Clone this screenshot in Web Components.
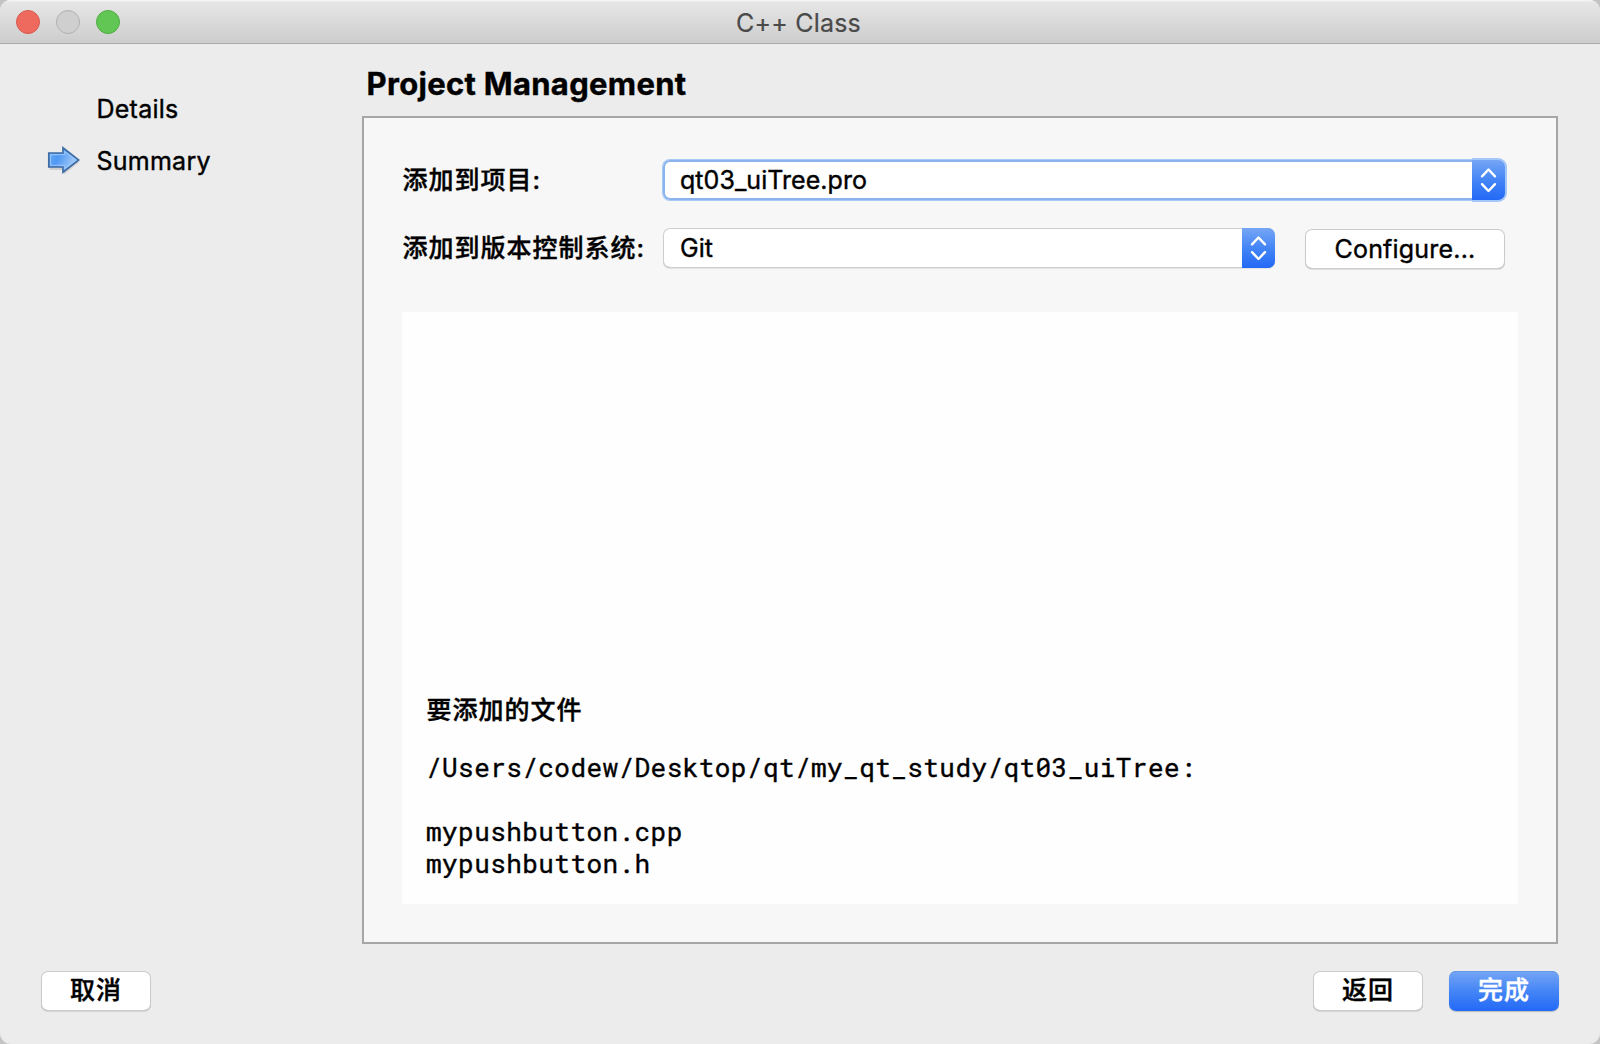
<!DOCTYPE html>
<html lang="zh-CN">
<head>
<meta charset="utf-8">
<title>C++ Class</title>
<style>
html, body { margin: 0; height: 100%; overflow: hidden; }
body {
  background: #c4c4c4;
  color: #000;
  font: 400 25px/32px Inter, "Noto Sans CJK SC", sans-serif;
  letter-spacing: .2px;
  font-feature-settings: "calt" 0;
  -webkit-text-stroke: .4px;
}
.zh { font-weight: 500; letter-spacing: 1px; }
</style>
</head>
<body>
<wizard-window caption="C++ Class">
  <wizard-step slot="steps">Details</wizard-step>
  <wizard-step slot="steps" current>Summary</wizard-step>
  <wizard-page heading="Project Management">
    <form-row label="添加到项目:">
      <combo-box focused>qt03_uiTree.pro</combo-box>
    </form-row>
    <form-row label="添加到版本控制系统:">
      <combo-box>Git</combo-box>
      <push-button style="--w:200px;--lh:41px;margin:1px 0 0 30px">Configure...</push-button>
    </form-row>
    <file-summary heading="要添加的文件">/Users/codew/Desktop/qt/my_qt_study/qt03_uiTree:

mypushbutton.cpp
mypushbutton.h</file-summary>
  </wizard-page>
  <push-button slot="left" class="zh">取消</push-button>
  <push-button slot="right" class="zh">返回</push-button>
  <push-button slot="right" class="zh" primary>完成</push-button>
</wizard-window>

<script>
const define = (name, render) => customElements.define(name, class extends HTMLElement {
  connectedCallback() {
    if (this.shadowRoot) return;
    this.attachShadow({ mode: 'open' }).innerHTML = render(this);
  }
});

define('traffic-lights', () => `
<style>
:host { display: flex; gap: 16px; }
i { width: 24px; height: 24px; border-radius: 50%; box-sizing: border-box; border: 1px solid; }
.close { background: #ee6a5f; border-color: #d9594f; }
.min { background: #cfcfcf; border-color: #b1b1b1; }
.zoom { background: #62c655; border-color: #50ad43; }
</style>
<i class="close"></i><i class="min"></i><i class="zoom"></i>`);

define('wizard-window', el => `
<style>
:host { display: flex; flex-direction: column; height: 1044px; background: #ececec;
  border-radius: 11px; overflow: hidden; }
header { flex: none; box-sizing: border-box; height: 44px; padding: 0 16px; display: grid;
  grid-template-columns: 1fr auto 1fr; align-items: center; border-bottom: 1px solid #a9a9a9;
  background: linear-gradient(#f4f4f4 0, #f4f4f4 1px, #e6e6e6 2px, #cdcdcd 43px); color: #4a4a4a;
  -webkit-text-stroke: .2px; }
header span { padding-top: 2px; margin-right: 3px; }
main { flex: none; display: flex; height: 900px; }
nav { width: 362px; display: flex; flex-direction: column; gap: 20px; padding-top: 49px; box-sizing: border-box; }
footer { display: flex; gap: 26px; padding: 27px 41px 0; }
.grow { flex: 1; }
</style>
<header><traffic-lights></traffic-lights><span>${el.getAttribute('caption')}</span></header>
<main><nav><slot name="steps"></slot></nav><slot></slot></main>
<footer><slot name="left"></slot><div class="grow"></div><slot name="right"></slot></footer>`);

define('wizard-step', el => `
<style>
:host { display: flex; height: 32px; line-height: 32px; align-items: center; letter-spacing: .25px; }
.mark { width: 50.5px; height: 32px; padding-left: 46px; }
svg { display: block; }
</style>
<div class="mark">${el.hasAttribute('current') ? `
<svg width="38" height="32" viewBox="0 0 38 32">
  <defs>
    <linearGradient id="a" x1="0" y1="0" x2="1" y2=".35"><stop offset="0" stop-color="#6aaaf5"/><stop offset=".4" stop-color="#4f98f3"/><stop offset="1" stop-color="#a9cdf8"/></linearGradient>
  </defs>
  <path d="M3.5 10H18V5.5L33.5 17 18 29.6V25H3.5Z" fill="#000" opacity=".12"/>
  <path d="M2.8 8H17V2.8L32.6 15 17 27.2V22H2.8Z" fill="url(#a)" stroke="#3e6ca6" stroke-width="1.7"/>
  <path d="M4.6 9.6H18.5V6.6L29.8 15 18.5 23.4V20.4H4.6Z" fill="none" stroke="#9cc8fb" stroke-width="1.3" opacity=".8"/>
</svg>` : ''}</div><slot></slot>`);

define('wizard-page', el => `
<style>
:host { display: block; width: 1196px; }
h1 { margin: 0; padding: 20px 0 0 4.6px; height: 52px; font-size: 31px; line-height: 40px; font-weight: 700; letter-spacing: .3px; }
section { box-sizing: border-box; height: 828px; border: 2px solid #a6a6a6; background: #f7f7f7;
  padding: 42px 38px 38px; display: flex; flex-direction: column; }
</style>
<h1>${el.getAttribute('heading')}</h1><section><slot></slot></section>`);

define('form-row', el => `
<style>
:host { display: flex; height: 40px; margin: 0 13px 28px 0; }
label { width: 261px; box-sizing: border-box; padding-left: .5px; line-height: 40px; white-space: nowrap; font-weight: 500; letter-spacing: 1px; }
::slotted(combo-box) { flex: 1; }
</style>
<label>${el.getAttribute('label')}</label><slot></slot>`);

define('combo-box', () => `
<style>
:host { display: flex; box-sizing: border-box; height: 40px; border-radius: 7px; background: #fff; letter-spacing: .05px;
  box-shadow: inset 0 0 0 1px #cecece, inset 0 -1px 0 #b4b4b4, 0 1px 1px rgba(0,0,0,.08); }
:host([focused]) { box-shadow: inset 0 0 0 2px #8ab4ee, 0 0 0 1px #a6c9f5; }
span { flex: 1; padding-left: 17px; line-height: 40px; }
b { width: 33px; border-radius: 0 7px 7px 0; background: linear-gradient(#76a6f5, #4485f6 50%, #2369f6);
  display: flex; align-items: center; justify-content: center; }
:host([focused]) b { box-shadow: 0 0 0 2px #a3c7f6; clip-path: inset(-3px -3px -3px 0); }
</style>
<span><slot></slot></span>
<b><svg width="17" height="26" viewBox="0 0 17 26" fill="none" stroke="#fff" stroke-width="2.4" stroke-linecap="round" stroke-linejoin="round"><path d="M2 9.3 8.5 2.5 15 9.3M2 17.2 8.5 24 15 17.2"/></svg></b>`);

define('push-button', () => `
<style>
:host { display: block; flex: none; box-sizing: border-box; width: var(--w, 110px); height: 40px; border-radius: 7px;
  background: #fff; text-align: center; line-height: var(--lh, 39px);
  box-shadow: inset 0 0 0 1px #cbcbcb, inset 0 -1px 0 #b0b0b0, 0 1px 1px rgba(0,0,0,.1); }
:host([primary]) { color: #fff; background: linear-gradient(#76a6f5, #4485f6 50%, #2369f6);
  box-shadow: inset 0 1px 0 #6497e6, 0 1px 1px rgba(0,0,0,.2); }
</style>
<slot></slot>`);

define('file-summary', el => `
<style>
:host { display: flex; flex-direction: column; justify-content: flex-end; height: 592px; margin-top: 16px; box-sizing: border-box;
  padding: 0 24px 25px; background: #fefefe; }
h2 { margin: 0 0 25px; padding-left: .5px; font-size: 25px; line-height: 32px; font-weight: 500; letter-spacing: 1px; }
pre { margin: 0; font: 400 26px/32px "Roboto Mono", "Liberation Mono", monospace; letter-spacing: .44px; }
</style>
<h2>${el.getAttribute('heading')}</h2><pre><slot></slot></pre>`);
</script>
</body>
</html>
